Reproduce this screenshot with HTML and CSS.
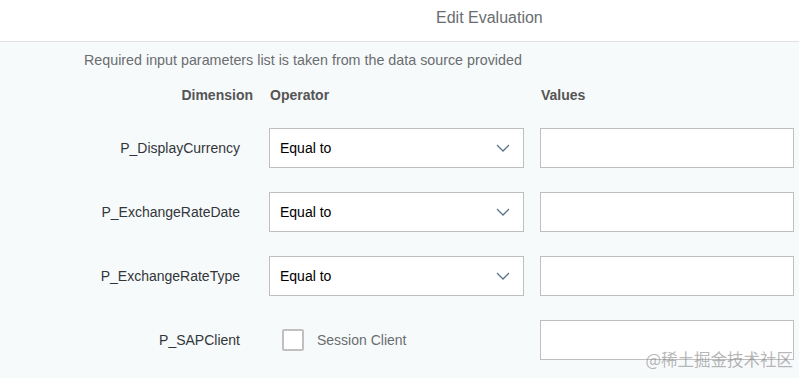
FILE: index.html
```html
<!DOCTYPE html>
<html lang="en">
<head>
    <meta charset="UTF-8">
    <meta name="viewport" content="width=device-width, initial-scale=1.0">
    <title>Edit Evaluation</title>
    <link rel="stylesheet" href="styles.css">
</head>
<body>
    <!-- Dialog Header -->
    <header class="dialog-header">
        <h1>Edit Evaluation</h1>
    </header>

    <!-- Dialog Content -->
    <main class="dialog-content">
        <p class="info">Required input parameters list is taken from the data source provided</p>

        <div class="param-grid">
            <div class="col-head dim">Dimension</div>
            <div class="col-head">Operator</div>
            <div class="col-head">Values</div>

            <div class="label">P_DisplayCurrency</div>
            <div class="select"><span>Equal to</span><svg class="chevron" width="14" height="8" viewBox="0 0 14 8"><path d="M1 1 L7 7 L13 1" fill="none" stroke="#5b738b" stroke-width="1.3"/></svg></div>
            <div class="input"></div>

            <div class="label">P_ExchangeRateDate</div>
            <div class="select"><span>Equal to</span><svg class="chevron" width="14" height="8" viewBox="0 0 14 8"><path d="M1 1 L7 7 L13 1" fill="none" stroke="#5b738b" stroke-width="1.3"/></svg></div>
            <div class="input"></div>

            <div class="label">P_ExchangeRateType</div>
            <div class="select"><span>Equal to</span><svg class="chevron" width="14" height="8" viewBox="0 0 14 8"><path d="M1 1 L7 7 L13 1" fill="none" stroke="#5b738b" stroke-width="1.3"/></svg></div>
            <div class="input"></div>

            <div class="label">P_SAPClient</div>
            <div class="check-cell">
                <span class="checkbox"></span>
                <span class="check-text">Session Client</span>
            </div>
            <div class="input"></div>
        </div>
    </main>

    <div class="watermark">@稀土掘金技术社区</div>
</body>
</html>
```

FILE: styles.css
```css
body {
    font-family: "Liberation Sans", Arial, sans-serif;
    background-color: #f7fafb;
    color: #32363a;
    margin: 0;
    padding: 0;
    height: 378px;
    overflow: hidden;
    position: relative;
}
.dialog-header {
    background-color: #fff;
    height: 35px;
    padding-bottom: 6px;
    border-bottom: 1px solid #e0e0e0;
    display: flex;
    align-items: center;
    padding-left: 436px;
}
.dialog-header h1 {
    margin: 0;
    font-size: 16px;
    font-weight: normal;
    color: #6a6d70;
}
.dialog-content {
    padding-top: 10px;
}
.info {
    margin: 0 0 0 84px;
    font-size: 14.3px;
    line-height: 17px;
    color: #6a6d70;
}
.param-grid {
    display: grid;
    grid-template-columns: 253px 255px 254px;
    grid-auto-rows: 40px;
    grid-template-rows: 17px;
    column-gap: 16px;
    row-gap: 24px;
    margin-top: 18px;
}
.col-head {
    font-size: 14px;
    font-weight: bold;
    color: #555;
    line-height: 17px;
    padding-left: 1px;
}
.col-head.dim {
    text-align: right;
    padding-left: 0;
}
.label {
    font-size: 14px;
    text-align: right;
    padding-right: 13px;
    display: flex;
    align-items: center;
    justify-content: flex-end;
}
.select, .input {
    background-color: #fff;
    border: 1px solid #bfbfbf;
    box-sizing: border-box;
}
.select {
    display: flex;
    align-items: center;
    justify-content: space-between;
    padding: 0 13px 0 10px;
    font-size: 14px;
    color: #000;
}
.check-cell {
    display: flex;
    align-items: center;
    gap: 13px;
    padding-left: 13px;
}
.checkbox {
    width: 22px;
    height: 22px;
    box-sizing: border-box;
    border: 2px solid #c0c0c0;
    border-radius: 2px;
    background-color: #fff;
}
.check-text {
    font-size: 14px;
    color: #6a6d70;
}
.watermark {
    position: absolute;
    right: 6px;
    bottom: 7px;
    font-size: 16.5px;
    color: rgba(120, 120, 120, 0.55);
    font-family: "Noto Sans CJK SC", sans-serif;
}
```
